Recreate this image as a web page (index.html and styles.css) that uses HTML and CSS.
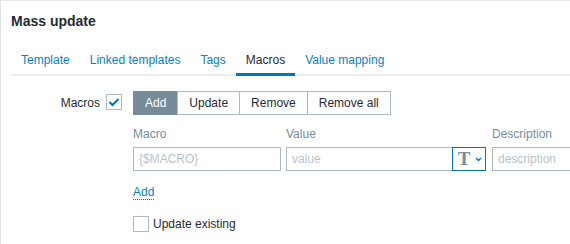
FILE: index.html
```html
<!DOCTYPE html>
<html lang="en">
<head>
  <meta charset="UTF-8" />
  <title>Mass update</title>
  <link rel="stylesheet" href="styles.css">
</head>
<body>

  <div class="dialog">
    <h4 class="title">Mass update</h4>

    <ul class="tabs">
      <li><a class="tab">Template</a></li>
      <li><a class="tab">Linked templates</a></li>
      <li><a class="tab">Tags</a></li>
      <li><a class="tab active">Macros</a></li>
      <li><a class="tab">Value mapping</a></li>
    </ul>

    <div class="form">
      <label class="label">Macros</label>
      <div class="field">
        <span class="checkbox checked">
          <svg width="12" height="10" viewBox="0 0 12 10"><polyline points="1.5,5 4.5,8 10.5,2" fill="none" stroke="#0275b8" stroke-width="2"/></svg>
        </span>

        <div class="macros">
          <div class="radio-group">
            <span class="radio active">Add</span>
            <span class="radio">Update</span>
            <span class="radio">Remove</span>
            <span class="radio">Remove all</span>
          </div>

          <div class="macro-table">
            <div class="cells head">
              <div class="col-macro">Macro</div>
              <div class="col-value">Value</div>
              <div class="col-desc">Description</div>
            </div>
            <div class="cells">
              <input class="input col-macro" type="text" placeholder="{$MACRO}">
              <div class="col-value value-wrap">
                <input class="input value-input" type="text" placeholder="value">
                <button class="type-btn"><span class="type-t">T</span><svg width="7" height="5" viewBox="0 0 7 5"><polyline points="1,1 3.5,3.5 6,1" fill="none" stroke="#0275b8" stroke-width="1.3"/></svg></button>
              </div>
              <input class="input col-desc" type="text" placeholder="description">
            </div>
          </div>

          <a class="link-add">Add</a>

          <div class="check-row">
            <span class="checkbox"></span>
            <span>Update existing</span>
          </div>
        </div>
      </div>
    </div>
  </div>

</body>
</html>
```

FILE: styles.css
```css
* {
  margin: 0;
  padding: 0;
  box-sizing: border-box;
}

html, body {
  width: 100%;
  height: 100%;
  overflow: hidden;
  background: #fff;
  font-family: "Liberation Sans", Arial, sans-serif;
  font-size: 12px;
  line-height: 14px;
  color: #1f2c33;
}

.dialog {
  height: 100%;
  overflow: hidden;
  border-left: 1px solid #dfe4e7;
  border-top: 1px solid #e6eaec;
  padding: 12px 0 0 10px;
}

.title {
  font-size: 14px;
  line-height: 16px;
  font-weight: bold;
  margin-bottom: 18px;
}

.tabs {
  list-style: none;
  display: flex;
  border-bottom: 2px solid #ebeef0;
}

.tabs li {
  margin-bottom: -2px;
}

.tab {
  display: block;
  padding: 6px 10px;
  border-bottom: 3px solid transparent;
  color: #0a7fc4;
  cursor: pointer;
}

.tab.active {
  color: #1f2c33;
  border-bottom-color: #0275b8;
}

.form {
  display: grid;
  grid-template-columns: 89px 1fr;
  column-gap: 6px;
  padding-top: 15px;
}

.label {
  text-align: right;
  padding-top: 5px;
}

.field {
  display: flex;
  gap: 11px;
  align-items: flex-start;
}

.checkbox {
  width: 16px;
  height: 16px;
  border: 1px solid #acbbc2;
  background: #fff;
  display: flex;
  align-items: center;
  justify-content: center;
  flex-shrink: 0;
}

.field > .checkbox {
  margin-top: 3px;
}

.radio-group {
  display: flex;
}

.radio {
  height: 24px;
  line-height: 22px;
  padding: 0 11px;
  border: 1px solid #acbbc2;
  background: #fff;
  margin-left: -1px;
}

.radio:first-child {
  margin-left: 0;
}

.radio.active {
  background: #768d99;
  border-color: #768d99;
  color: #fff;
}

.macro-table {
  margin-top: 12px;
}

.cells {
  display: flex;
  gap: 5px;
}

.cells.head {
  color: #768d99;
  margin-bottom: 6px;
}

.col-macro {
  width: 148px;
}

.col-value {
  width: 200px;
}

.col-desc {
  width: 150px;
  flex-shrink: 0;
  margin-left: 1px;
}

.input {
  height: 24px;
  border: 1px solid #acbbc2;
  padding: 0 5px;
  font-family: inherit;
  font-size: 12px;
  color: #1f2c33;
  background: #fff;
  outline: none;
}

.input::placeholder {
  color: #b7c4ca;
}

.value-wrap {
  display: flex;
}

.value-input {
  width: 167px;
}

.type-btn {
  width: 34px;
  height: 24px;
  margin-left: -1px;
  border: 1px solid #0275b8;
  background: #fff;
  display: flex;
  align-items: center;
  justify-content: center;
  gap: 5px;
  padding-left: 2px;
}

.type-t {
  font-family: "Liberation Serif", "Times New Roman", serif;
  font-size: 19px;
  font-weight: bold;
  color: #768d99;
  line-height: 20px;
}

.link-add {
  display: inline-block;
  margin-top: 14px;
  color: #0a7fc4;
  border-bottom: 1px dotted #0275b8;
  cursor: pointer;
}

.check-row {
  display: flex;
  align-items: center;
  gap: 4px;
  margin-top: 16px;
}
```
